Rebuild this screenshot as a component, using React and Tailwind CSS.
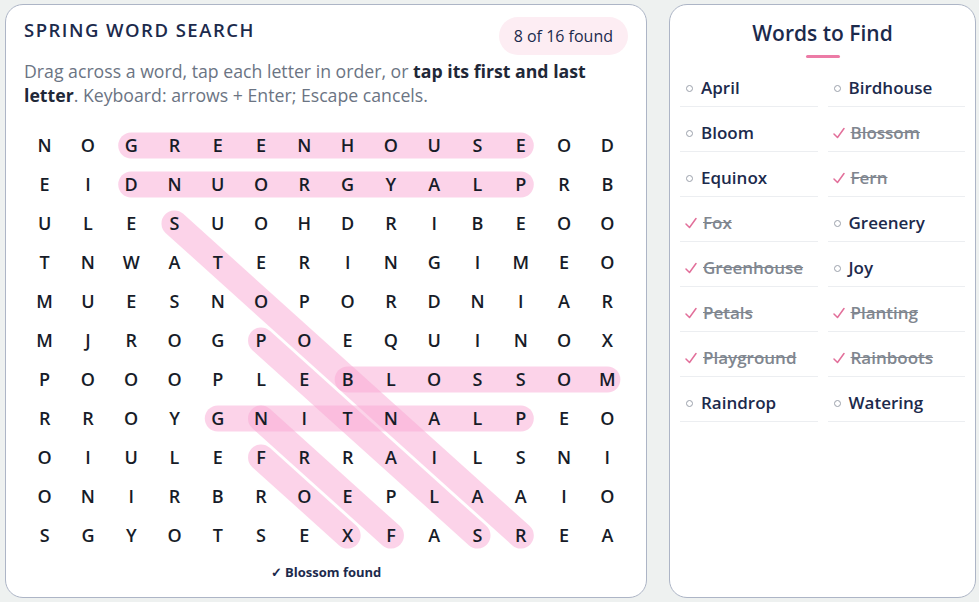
import React from "react";

const GRID = [
  "NOGREENHOUSEOD",
  "EIDNUORGYALPRB",
  "ULESUOHDRIBEOO",
  "TNWATERINGIMEO",
  "MUESNOPORDNIAR",
  "MJROGPOEQUINOX",
  "POOOPLEBLOSSOM",
  "RROYGNITNALPEO",
  "OIULEFRRAILSNI",
  "ONIRBROEPLAAIO",
  "SGYOTSEXFASREA",
];
const CW = 606 / 14;
const CH = 39;
const LINES = [
  [0, 2, 0, 11],
  [1, 2, 1, 11],
  [6, 7, 6, 13],
  [7, 4, 7, 11],
  [2, 3, 10, 11],
  [5, 5, 10, 10],
  [8, 5, 10, 7],
  [7, 5, 10, 8],
];
const WORDS = [
  ["April", false],
  ["Birdhouse", false],
  ["Bloom", false],
  ["Blossom", true],
  ["Equinox", false],
  ["Fern", true],
  ["Fox", true],
  ["Greenery", false],
  ["Greenhouse", true],
  ["Joy", false],
  ["Petals", true],
  ["Planting", true],
  ["Playground", true],
  ["Rainboots", true],
  ["Raindrop", false],
  ["Watering", false],
];

function Check({ className }) {
  return (
    <svg width="12" height="12" viewBox="0 0 12 12" className={className} fill="none">
      <path d="M1 7 L4.5 10.5 L11 1.5" stroke="currentColor" strokeWidth="1.5" strokeLinecap="round" strokeLinejoin="round" />
    </svg>
  );
}

export default function App() {
  return (
    <div className="w-[979px] h-[602px] bg-[#eef1f0] font-['Open_Sans',sans-serif] flex gap-[22px] pl-[5px] pt-[4px] overflow-hidden">
      <div className="w-[642px] h-[594px] shrink-0 bg-white border border-[#adb5c6] rounded-[18px] px-[18px] pt-[12px] flex flex-col">
        <div className="flex justify-between items-start">
          <h1 className="mt-[1px] text-[18.5px] leading-[24px] font-semibold tracking-[0.08em] text-[#1c2a4c]">SPRING WORD SEARCH</h1>
          <div className="h-[38px] px-[15px] rounded-full bg-[#fdedf3] flex items-center text-[16px] text-[#1c2a4c]">8 of 16 found</div>
        </div>
        <p className="mt-[4px] text-[17.7px] leading-[24px] text-[#6b7483]">
          Drag across a word, tap each letter in order, or <b className="font-bold text-[#1f2838]">tap its first and last letter</b>. Keyboard: arrows + Enter; Escape cancels.
        </p>
        <div className="relative mt-[19px] ml-[-1px] w-[606px] h-[429px] shrink-0">
          <svg className="absolute inset-0" width="606" height="429">
            {LINES.map(([r1, c1, r2, c2], i) => (
              <line
                key={i}
                x1={CW / 2 + c1 * CW}
                y1={CH / 2 + r1 * CH}
                x2={CW / 2 + c2 * CW}
                y2={CH / 2 + r2 * CH}
                stroke="#f9a8d4"
                strokeOpacity="0.5"
                strokeWidth="26"
                strokeLinecap="round"
              />
            ))}
          </svg>
          <div className="relative grid grid-cols-[repeat(14,minmax(0,1fr))]">
            {GRID.map((row, r) =>
              row.split("").map((ch, c) => (
                <div key={r + "-" + c} className="h-[39px] flex items-center justify-center text-[18px] font-semibold text-[#171c28]">
                  {ch}
                </div>
              ))
            )}
          </div>
        </div>
        <div className="mt-[8px] ml-[-1px] w-[606px] text-center text-[13px] leading-[18px] font-bold text-[#1c2a4c]">✓ Blossom found</div>
      </div>

      <div className="w-[307px] h-[594px] shrink-0 bg-white border border-[#adb5c6] rounded-[18px] px-[10px] pt-[13px] flex flex-col items-stretch">
        <h2 className="text-center text-[21px] leading-[30px] font-semibold text-[#1c2a4c]">Words to Find</h2>
        <div className="mx-auto mt-[7px] w-[34px] h-[3px] rounded-full bg-[#ec7ba6]"></div>
        <div className="mt-[4px] grid grid-cols-2 gap-x-[10px]">
          {WORDS.map(([w, found]) => (
            <div key={w} className="h-[45px] border-b border-[#eceef1] flex items-center pt-[8px] pl-[5px]">
              {found ? (
                <>
                  <Check className="text-[#e26f9a] shrink-0" />
                  <span className="ml-[6px] text-[17px] font-semibold text-[#80868f] line-through decoration-[#80868f]">{w}</span>
                </>
              ) : (
                <>
                  <span className="ml-[1px] w-[7px] h-[7px] rounded-full border border-[#9ba1ab] shrink-0"></span>
                  <span className="ml-[8px] text-[17px] font-semibold text-[#1c2a4c]">{w}</span>
                </>
              )}
            </div>
          ))}
        </div>
      </div>
    </div>
  );
}
